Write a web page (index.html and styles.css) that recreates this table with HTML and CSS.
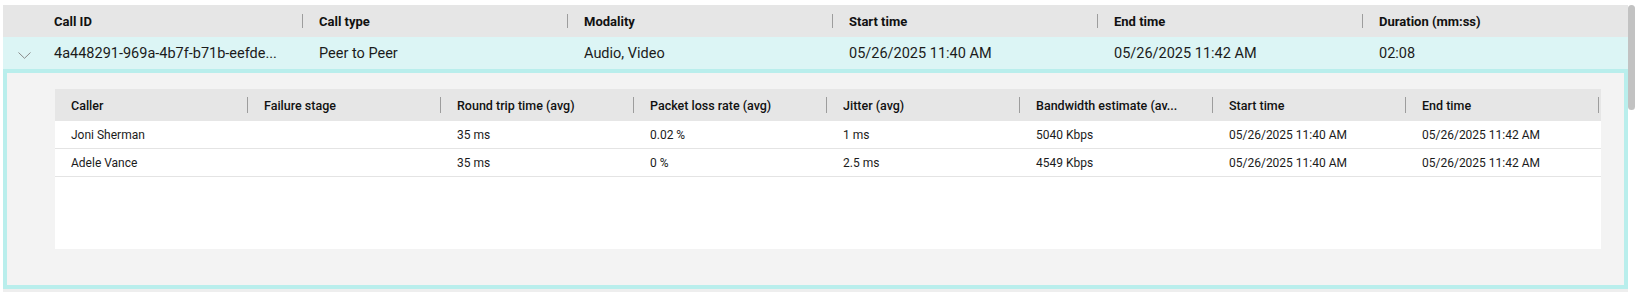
FILE: index.html
```html
<!DOCTYPE html>
<html lang="en">
<head>
<meta charset="utf-8">
<title>Calls</title>
<link rel="stylesheet" href="styles.css">
</head>
<body>
<div class="page">
  <div class="main">
    <div class="thead">
      <div class="cell chev-cell"></div>
      <div class="cell hcell"><span class="label">Call ID</span><span class="sep"></span></div>
      <div class="cell hcell"><span class="label">Call type</span><span class="sep"></span></div>
      <div class="cell hcell"><span class="label">Modality</span><span class="sep"></span></div>
      <div class="cell hcell"><span class="label">Start time</span><span class="sep"></span></div>
      <div class="cell hcell"><span class="label">End time</span><span class="sep"></span></div>
      <div class="cell hcell"><span class="label">Duration (mm:ss)</span></div>
    </div>
    <div class="row expanded">
      <div class="cell chev-cell">
        <svg class="chev" width="13" height="7" viewBox="0 0 13 7"><polyline points="0.5,0.5 6.5,6.3 12.5,0.5" fill="none" stroke="#8a8a8a" stroke-width="1"/></svg>
      </div>
      <div class="cell dcell">4a448291-969a-4b7f-b71b-eefde...</div>
      <div class="cell dcell">Peer to Peer</div>
      <div class="cell dcell">Audio, Video</div>
      <div class="cell dcell">05/26/2025 11:40 AM</div>
      <div class="cell dcell">05/26/2025 11:42 AM</div>
      <div class="cell dcell">02:08</div>
    </div>
    <div class="detail">
      <div class="itable">
        <div class="ihead">
          <div class="icell ihcell"><span class="label">Caller</span><span class="sep"></span></div>
          <div class="icell ihcell"><span class="label">Failure stage</span><span class="sep"></span></div>
          <div class="icell ihcell"><span class="label">Round trip time (avg)</span><span class="sep"></span></div>
          <div class="icell ihcell"><span class="label">Packet loss rate (avg)</span><span class="sep"></span></div>
          <div class="icell ihcell"><span class="label">Jitter (avg)</span><span class="sep"></span></div>
          <div class="icell ihcell"><span class="label">Bandwidth estimate (av...</span><span class="sep"></span></div>
          <div class="icell ihcell"><span class="label">Start time</span><span class="sep"></span></div>
          <div class="icell ihcell"><span class="label">End time</span><span class="sep"></span></div>
        </div>
        <div class="irow">
          <div class="icell">Joni Sherman</div>
          <div class="icell"></div>
          <div class="icell">35 ms</div>
          <div class="icell">0.02 %</div>
          <div class="icell">1 ms</div>
          <div class="icell">5040 Kbps</div>
          <div class="icell">05/26/2025 11:40 AM</div>
          <div class="icell">05/26/2025 11:42 AM</div>
        </div>
        <div class="irow">
          <div class="icell">Adele Vance</div>
          <div class="icell"></div>
          <div class="icell">35 ms</div>
          <div class="icell">0 %</div>
          <div class="icell">2.5 ms</div>
          <div class="icell">4549 Kbps</div>
          <div class="icell">05/26/2025 11:40 AM</div>
          <div class="icell">05/26/2025 11:42 AM</div>
        </div>
      </div>
    </div>
    <div class="next"></div>
  </div>
  <div class="scrollbar"><div class="thumb"></div></div>
</div>
</body>
</html>
```
FILE: styles.css
```css
html, body {
  margin: 0;
  padding: 0;
  background: #ffffff;
}
body {
  font-family: Roboto, "Liberation Sans", Arial, sans-serif;
  color: #1b1b1b;
  overflow: hidden;
}
.page {
  display: flex;
  align-items: flex-start;
  padding: 5px 0 0 3px;
}
.main {
  width: 1625px;
  display: flex;
  flex-direction: column;
}
.main > * {
  flex: none;
}
.thead, .row {
  display: grid;
  grid-template-columns: 35px repeat(6, 265px);
  height: 32px;
}
.thead {
  background: #e6e6e6;
}
.row.expanded {
  background: #dcf5f5;
}
.cell {
  display: flex;
  align-items: center;
  min-width: 0;
}
.hcell {
  padding-left: 16px;
  font-size: 13px;
  font-weight: 700;
  color: #111;
}
.label {
  flex: 1;
  white-space: nowrap;
  overflow: hidden;
}
.sep {
  width: 1px;
  height: 14px;
  background: #9d9d9d;
  flex: none;
}
.dcell {
  padding-left: 16px;
  font-size: 14.5px;
  white-space: nowrap;
  overflow: hidden;
}
.chev-cell {
  padding-left: 15px;
  padding-top: 4px;
}
.chev {
  display: block;
}
.detail {
  border: 4px solid #b9eeec;
  background: #f3f3f3;
  padding: 16px 23px 36px 48px;
  display: flex;
}
.itable {
  width: 1546px;
  height: 160px;
  background: #ffffff;
  display: flex;
  flex-direction: column;
}
.itable > * {
  flex: none;
}
.ihead, .irow {
  display: grid;
  grid-template-columns: repeat(8, 193px);
}
.ihead {
  height: 32px;
  background: #e6e6e6;
}
.irow {
  height: 27px;
  border-bottom: 1px solid #e4e4e4;
}
.icell {
  display: flex;
  align-items: center;
  padding-left: 16px;
  font-size: 12px;
  white-space: nowrap;
  overflow: hidden;
  min-width: 0;
}
.ihcell {
  font-size: 12.5px;
  font-weight: 500;
  color: #111;
}
.ihcell .sep {
  height: 16px;
}
.next {
  height: 3px;
  background: #eeeeee;
}
.scrollbar {
  width: 14px;
  flex: none;
}
.thumb {
  width: 7px;
  height: 105px;
  background: #c2c2c2;
  border-radius: 4px;
}
```
